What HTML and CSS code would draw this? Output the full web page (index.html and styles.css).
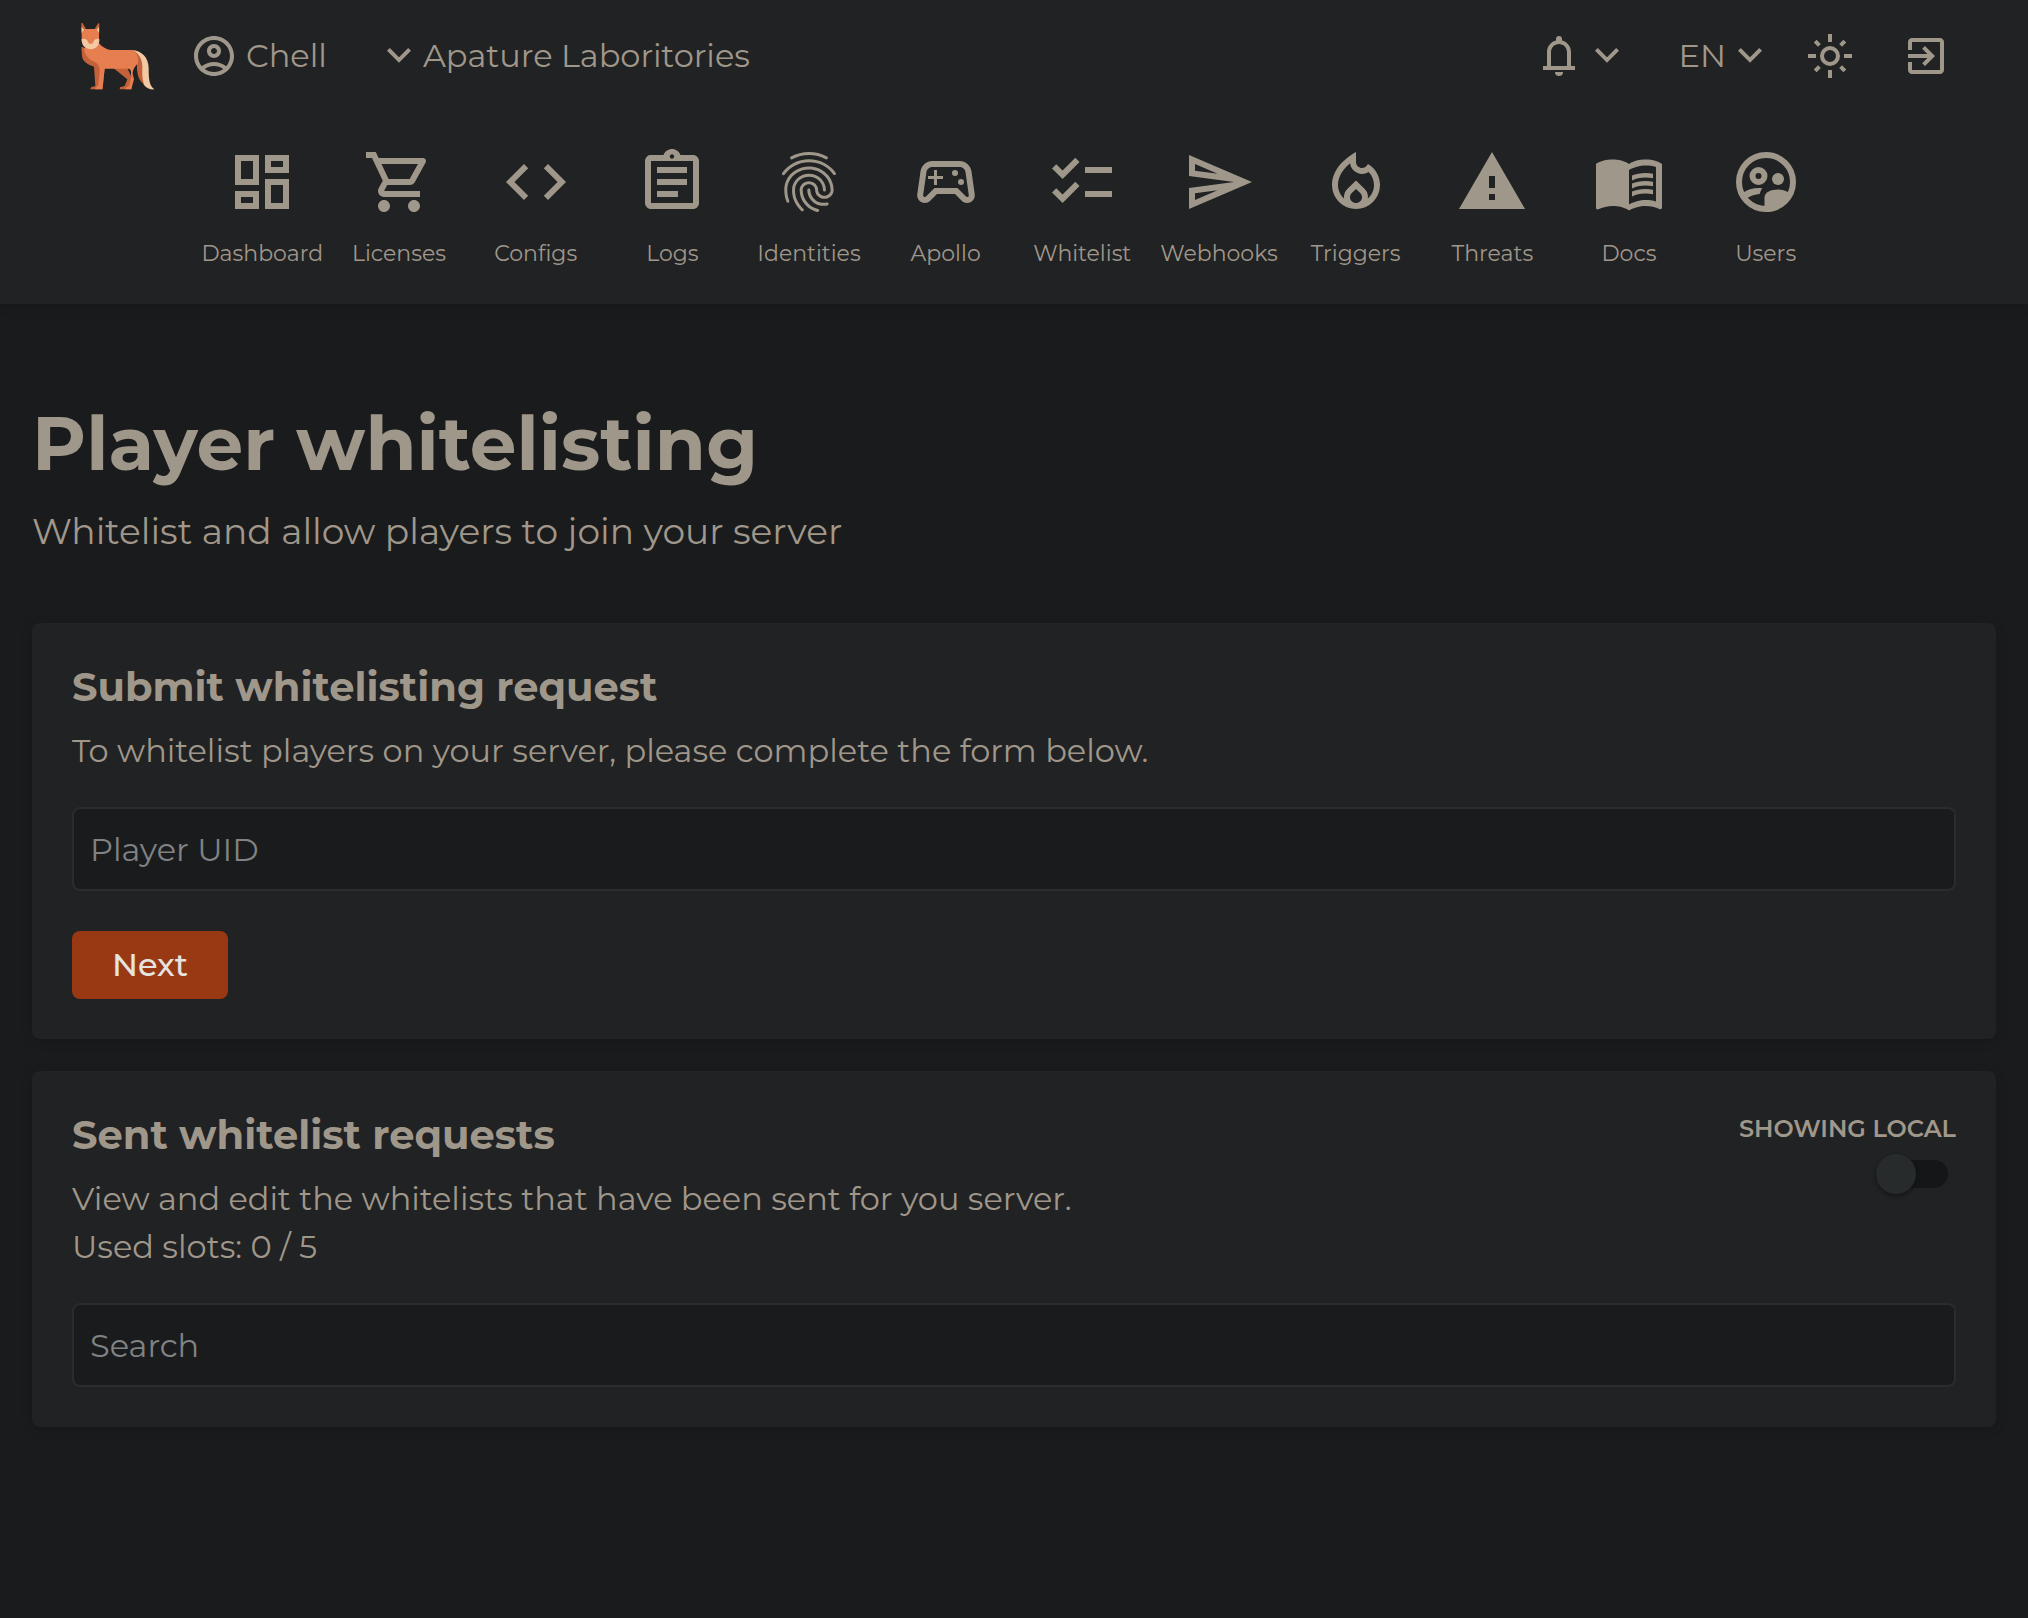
FILE: index.html
```html
<!DOCTYPE html>
<html lang="en">
<head>
<meta charset="utf-8">
<meta name="viewport" content="width=device-width, initial-scale=1">
<title>Player whitelisting</title>
<link rel="stylesheet" href="styles.css">
</head>
<body>
<header class="site-header">
  <div class="topbar">
    <a class="logo" href="#" aria-label="Home">
      <svg viewBox="60 66 228 204" aria-hidden="true">
        <path fill="#f2c9a2" d="M215 150C245 152 266 172 266 205C266 238 268 258 283 268C262 270 246 256 242 228L232 176Z"/>
        <path fill="#c3613b" d="M215 150C240 158 249 184 247 210C246 228 248 240 252 252C238 244 230 226 231 196Z"/>
        <path fill="#c3613b" d="M64 140L66 168C68 184 82 194 102 200L106 258L93 262L91 268H128L134 204H160L202 238L194 258L180 262L179 268H214L216 234L200 200L120 160Z"/>
        <path fill="#e67e50" d="M72 145C74 162 82 176 100 184C114 190 120 200 119 216L115 256L106 263V268H127L134 206H163L205 206C216 206 212 222 214 232L207 258L197 263V268H214L222 238L218 222C218 206 229 196 234 190C236 168 228 152 213 150H152C138 148 128 142 117 130L90 138Z"/>
        <path fill="#c3613b" d="M64 70L68 69L78 87H104L115 69L118 71V100H64Z"/>
        <path fill="#f2c9a2" d="M65 80L73 90L69 97L65 97ZM117 80L109 90L113 97H117Z"/>
        <path fill="#e67e50" d="M76 87H106L117 97V122L92 140L65 122V97Z"/>
        <path fill="#f2c9a2" d="M65 117C76 114 82 118 84 126C86 134 98 134 100 126C102 118 108 114 118 117C119 134 110 147 92 148C74 147 64 134 65 117Z"/>
      </svg>
    </a>
    <a class="top-item account" href="#">
      <svg class="icon" viewBox="0 0 24 24" aria-hidden="true"><path d="M12 2C6.480 2 2 6.480 2 12s4.480 10 10 10 10-4.480 10-10S17.520 2 12 2zM7.350 18.500C8.660 17.560 10.260 17 12 17s3.340.560 4.650 1.500c-1.310.940-2.910 1.500-4.650 1.500s-3.340-.560-4.650-1.500zm10.790-1.380C16.450 15.800 14.320 15 12 15s-4.450.800-6.140 2.120C4.700 15.730 4 13.950 4 12c0-4.420 3.580-8 8-8s8 3.580 8 8c0 1.950-.700 3.730-1.860 5.120z"/><path d="M12 6c-1.930 0-3.500 1.570-3.500 3.500S10.070 13 12 13s3.500-1.570 3.500-3.500S13.930 6 12 6zm0 5c-.830 0-1.500-.670-1.500-1.500S11.170 8 12 8s1.500.670 1.500 1.500S12.830 11 12 11z"/></svg>
      <span>Chell</span>
    </a>
    <button class="top-item community" type="button" aria-haspopup="menu">
      <svg class="icon" viewBox="0 0 24 24" aria-hidden="true"><path d="M7.410 8L12 12.580 16.590 8 18 9.410l-6 6-6-6z"/></svg>
      <span>Apature Laboritories</span>
    </button>
    <div class="tools">
      <button class="top-item" type="button" aria-haspopup="menu" aria-label="Notifications">
        <svg class="icon" viewBox="0 0 24 24" aria-hidden="true"><path fill-rule="evenodd" d="M4 19v-2h2v-7c0-2.800 1.900-5.200 4.500-5.800V3.500a1.500 1.500 0 0 1 3 0v.700C16.100 4.800 18 7.200 18 10v7h2v2H4zm4-2h8v-7c0-2.200-1.800-4-4-4s-4 1.800-4 4v7zM10 20h4a2 2 0 0 1-4 0z"/></svg>
        <svg class="icon" viewBox="0 0 24 24" aria-hidden="true"><path d="M7.410 8L12 12.580 16.590 8 18 9.410l-6 6-6-6z"/></svg>
      </button>
      <button class="top-item language" type="button" aria-haspopup="menu" aria-label="Language: EN">
        <span>EN</span>
        <svg class="icon" viewBox="0 0 24 24" aria-hidden="true"><path d="M7.410 8L12 12.580 16.590 8 18 9.410l-6 6-6-6z"/></svg>
      </button>
      <button class="top-item theme" type="button" aria-label="Switch theme">
        <svg class="icon" viewBox="0 0 24 24" aria-hidden="true"><g fill="none" stroke="currentColor" stroke-width="2"><circle cx="12" cy="12" r="4"/><path d="M12 1v4M12 19v4M1 12h4M19 12h4M4.600 4.600l2.100 2.100M17.300 17.300l2.100 2.100M4.600 19.400l2.100-2.100M17.300 6.700l2.100-2.100"/></g></svg>
      </button>
      <button class="top-item logout" type="button" aria-label="Log out">
        <svg class="icon" viewBox="0 0 24 24" aria-hidden="true"><path d="M10.090 15.590L11.500 17l5-5-5-5-1.410 1.410L12.670 11H3v2h9.670l-2.580 2.590zM19 3H5c-1.110 0-2 .900-2 2v4h2V5h14v14H5v-4H3v4c0 1.100.890 2 2 2h14c1.100 0 2-.900 2-2V5c0-1.100-.900-2-2-2z"/></svg>
      </button>
    </div>
  </div>
  <nav class="main-nav" aria-label="Main">
    <a href="#"><svg viewBox="0 0 24 24" aria-hidden="true"><path d="M19 5v2h-4V5h4M9 5v6H5V5h4m10 8v6h-4v-6h4M9 17v2H5v-2h4M21 3h-8v6h8V3zM11 3H3v10h8V3zm10 8h-8v10h8V11zm-10 4H3v6h8v-6z"/></svg><span>Dashboard</span></a>
    <a href="#"><svg viewBox="0 0 24 24" aria-hidden="true"><path d="M15.55 13c.75 0 1.41-.41 1.75-1.03l3.58-6.49c.37-.66-.11-1.48-.87-1.48H5.21l-.94-2H1v2h2l3.6 7.59-1.35 2.44C4.52 15.37 5.48 17 7 17h12v-2H7l1.1-2h7.45zM6.16 6h12.15l-2.76 5H8.53L6.16 6zM7 18c-1.100 0-1.990.9-1.990 2S5.900 22 7 22s2-.9 2-2-.9-2-2-2zm10 0c-1.100 0-1.990.9-1.990 2s.89 2 1.990 2 2-.9 2-2-.9-2-2-2z"/></svg><span>Licenses</span></a>
    <a href="#"><svg viewBox="0 0 24 24" aria-hidden="true"><path d="M9.4 16.6L4.8 12l4.6-4.6L8 6l-6 6 6 6 1.4-1.4zm5.200 0l4.6-4.6-4.6-4.6L16 6l6 6-6 6-1.4-1.4z"/></svg><span>Configs</span></a>
    <a href="#"><svg viewBox="0 0 24 24" aria-hidden="true"><path d="M7 15h7v2H7zm0-4h10v2H7zm0-4h10v2H7zm12-4h-4.18C14.4 1.84 13.3 1 12 1c-1.300 0-2.400.84-2.820 2H5c-.14 0-.27.01-.4.04-.39.08-.74.28-1.010.55-.18.18-.33.4-.43.64-.1.23-.16.49-.16.77v14c0 .27.06.54.16.78s.25.45.43.64c.27.27.62.47 1.010.55.13.02.26.03.4.03h14c1.100 0 2-.9 2-2V5c0-1.100-.9-2-2-2zm-7-.25c.41 0 .75.34.75.75s-.34.75-.75.75-.75-.34-.75-.75.34-.75.75-.75zM19 19H5V5h14v14z"/></svg><span>Logs</span></a>
    <a href="#"><svg viewBox="0 0 24 24" aria-hidden="true"><path d="M17.81 4.47c-.08 0-.16-.02-.23-.06C15.66 3.42 14 3 12.01 3c-1.98 0-3.86.47-5.57 1.41-.24.13-.54.04-.68-.2-.13-.24-.04-.55.2-.68C7.82 2.52 9.86 2 12.01 2c2.13 0 3.99.47 6.03 1.52.25.13.34.43.21.67-.09.18-.26.28-.44.28zM3.5 9.72c-.1 0-.2-.03-.29-.09-.23-.16-.28-.47-.12-.7.99-1.4 2.25-2.5 3.75-3.27C9.98 4.04 14 4.03 17.15 5.65c1.5.77 2.76 1.86 3.75 3.25.16.22.11.54-.12.7-.23.16-.54.11-.7-.12-.9-1.26-2.04-2.25-3.39-2.94-2.87-1.47-6.54-1.47-9.4.01-1.36.7-2.5 1.7-3.4 2.96-.08.14-.23.21-.39.21zm6.25 12.07c-.13 0-.26-.05-.35-.15-.87-.87-1.34-1.43-2.01-2.64-.69-1.23-1.05-2.73-1.05-4.34 0-2.97 2.54-5.39 5.66-5.39s5.66 2.42 5.66 5.39c0 .28-.22.5-.5.5s-.5-.22-.5-.5c0-2.42-2.09-4.39-4.66-4.39-2.57 0-4.66 1.97-4.66 4.39 0 1.44.32 2.77.93 3.85.64 1.15 1.08 1.64 1.85 2.42.19.2.19.51 0 .71-.11.1-.24.15-.37.15zm7.17-1.85c-1.19 0-2.24-.3-3.1-.89-1.49-1.01-2.38-2.65-2.38-4.39 0-.28.22-.5.5-.5s.5.22.5.5c0 1.41.72 2.74 1.94 3.56.71.48 1.54.71 2.54.71.24 0 .64-.03 1.04-.1.27-.05.53.13.58.41.05.27-.13.53-.41.58-.57.11-1.07.12-1.21.12zM14.91 22c-.04 0-.09-.01-.13-.02-1.59-.44-2.63-1.03-3.72-2.1-1.4-1.39-2.17-3.24-2.17-5.22 0-1.62 1.38-2.94 3.08-2.94 1.7 0 3.08 1.32 3.08 2.94 0 1.07.93 1.94 2.08 1.94s2.08-.87 2.08-1.94c0-3.77-3.25-6.83-7.25-6.83-2.84 0-5.44 1.58-6.61 4.03-.39.81-.59 1.76-.59 2.8 0 .78.07 2.01.67 3.61.1.26-.03.55-.29.64-.26.1-.55-.04-.64-.29-.49-1.31-.73-2.61-.73-3.96 0-1.2.23-2.29.68-3.24 1.33-2.79 4.28-4.6 7.51-4.6 4.55 0 8.25 3.51 8.25 7.83 0 1.62-1.38 2.94-3.08 2.94s-3.08-1.32-3.08-2.94c0-1.07-.93-1.94-2.08-1.94s-2.08.87-2.08 1.94c0 1.71.66 3.31 1.87 4.51.95.94 1.86 1.46 3.27 1.85.27.07.42.35.35.61-.05.23-.26.38-.47.38z"/></svg><span>Identities</span></a>
    <a href="#"><svg viewBox="0 0 24 24" aria-hidden="true"><path d="M21.58 16.09l-1.09-7.66C20.21 6.46 18.52 5 16.53 5H7.47C5.48 5 3.79 6.46 3.51 8.43l-1.09 7.66C2.2 17.63 3.39 19 4.94 19c.68 0 1.32-.27 1.8-.75L9 16h6l2.25 2.25c.48.48 1.13.75 1.8.75 1.56 0 2.75-1.37 2.53-2.91zm-2.1.72c-.08.09-.21.19-.42.19-.15 0-.29-.06-.39-.16L15.83 14H8.17l-2.84 2.84c-.1.1-.24.16-.39.16-.21 0-.34-.1-.42-.19-.08-.09-.16-.23-.13-.44l1.09-7.66C5.63 7.74 6.48 7 7.47 7h9.06c.99 0 1.84.74 1.98 1.72l1.09 7.66c.03.2-.05.34-.12.43zM9 8H8v2H6v1h2v2h1v-2h2v-1H9z"/><circle cx="17" cy="12" r="1"/><circle cx="15" cy="9" r="1"/></svg><span>Apollo</span></a>
    <a href="#" aria-current="page"><svg viewBox="0 0 24 24" aria-hidden="true"><path d="M22 7h-9v2h9V7zm0 8h-9v2h9v-2zM5.54 11L2 7.46l1.41-1.41 2.12 2.12 4.24-4.24 1.41 1.41L5.54 11zm0 8L2 15.46l1.41-1.41 2.12 2.12 4.24-4.24 1.41 1.41L5.54 19z"/></svg><span>Whitelist</span></a>
    <a href="#"><svg viewBox="0 0 24 24" aria-hidden="true"><path d="M4.01 6.03l7.51 3.22-7.52-1 .01-2.22m7.500 8.72L4 17.970v-2.22l7.51-1M2.01 3L2 10l15 2-15 2 .01 7L23 12 2.01 3z"/></svg><span>Webhooks</span></a>
    <a href="#"><svg viewBox="0 0 24 24" aria-hidden="true"><path fill-rule="evenodd" d="M16 6l-.44.55C14.38 8.02 12 7.19 12 5.300V2S4 6 4 13a8 8 0 0 0 16 0c0-2.960-1.610-5.620-4-7zM12 19c-1.100 0-2-.87-2-1.940 0-.51.2-.99.58-1.360L12 14.300l1.430 1.400c.37.37.57.85.57 1.360C14 18.130 13.100 19 12 19zm3.960-1.500c.04-.36.22-1.890-1.130-3.220L12 11.500l-2.830 2.780c-1.360 1.340-1.170 2.880-1.130 3.220C6.790 16.400 6 14.790 6 13c0-3.160 2.130-5.650 4.030-7.250.23 1.990 1.930 3.550 3.990 3.550.78 0 1.540-.23 2.180-.66C17.340 9.780 18 11.350 18 13c0 1.790-.79 3.400-2.040 4.500z"/></svg><span>Triggers</span></a>
    <a href="#"><svg viewBox="0 0 24 24" aria-hidden="true"><path d="M1 21h22L12 2 1 21zm12-3h-2v-2h2v2zm0-4h-2v-4h2v4z"/></svg><span>Threats</span></a>
    <a href="#"><svg viewBox="0 0 24 24" aria-hidden="true"><path d="M21 5c-1.110-.35-2.330-.5-3.500-.5-1.950 0-4.050.4-5.500 1.500-1.450-1.100-3.550-1.500-5.500-1.500S2.450 4.900 1 6v14.650c0 .25.25.5.5.5.1 0 .15-.05.25-.05C3.100 20.450 5.050 20 6.500 20c1.950 0 4.050.4 5.500 1.500 1.350-.85 3.800-1.500 5.500-1.500 1.650 0 3.350.3 4.750 1.050.1.05.15.05.25.05.25 0 .5-.25.5-.5V6c-.6-.45-1.250-.75-2-1zm0 13.500c-1.100-.35-2.300-.5-3.500-.5-1.700 0-4.150.65-5.500 1.500V8c1.350-.85 3.800-1.500 5.500-1.500 1.200 0 2.400.15 3.500.5v11.500z"/><path d="M17.500 10.500c.88 0 1.730.09 2.500.26V9.240c-.79-.15-1.640-.24-2.500-.24-1.700 0-3.240.29-4.500.83v1.660c1.130-.64 2.700-.99 4.500-.99zM13 12.490v1.660c1.130-.64 2.700-.99 4.500-.99.88 0 1.730.09 2.500.26V11.900c-.79-.15-1.640-.24-2.500-.24-1.700 0-3.240.3-4.500.83zM17.500 14.330c-1.700 0-3.240.29-4.500.83v1.660c1.130-.64 2.700-.99 4.500-.99.88 0 1.730.09 2.500.26v-1.520c-.79-.16-1.640-.24-2.500-.24z"/></svg><span>Docs</span></a>
    <a href="#"><svg viewBox="0 0 24 24" aria-hidden="true"><g fill="none" stroke="currentColor" stroke-width="2"><circle cx="12" cy="12" r="9"/><circle cx="9.500" cy="10" r="2"/></g><circle cx="16" cy="11" r="2"/><path d="M4 15.800C6 14.400 8.400 13.800 10.800 14.100C10.300 14.600 10.100 15.300 9.900 16C8.400 16.100 7 16.600 5.700 17.300Z"/><path d="M11.500 21V17.100C11.500 15.400 13.800 14.500 16 14.500C17.300 14.500 18.600 14.900 19.500 15.400L20.300 16.500L17 20.200Z"/></svg><span>Users</span></a>
  </nav>
</header>
<main class="page">
  <h1>Player whitelisting</h1>
  <p class="lead">Whitelist and allow players to join your server</p>
  <form class="card" action="#">
    <h2>Submit whitelisting request</h2>
    <p>To whitelist players on your server, please complete the form below.</p>
    <input class="field" type="text" placeholder="Player UID" aria-label="Player UID">
    <button class="primary" type="button">Next</button>
  </form>
  <section class="card">
    <div class="card-head">
      <div>
        <h2>Sent whitelist requests</h2>
        <p>View and edit the whitelists that have been sent for you server.<br>Used slots: 0 / 5</p>
      </div>
      <label class="scope">
        <span>SHOWING LOCAL</span>
        <input class="switch" type="checkbox" role="switch">
      </label>
    </div>
    <input class="field" type="text" placeholder="Search" aria-label="Search">
  </section>
</main>
</body>
</html>
```
FILE: styles.css
```css
:root {
  --bg: #191b1c;
  --surface: #202223;
  --border: #2a2c2d;
  --text: #a0978b;
  --accent: #983913;
}

* {
  box-sizing: border-box;
}

body {
  margin: 0;
  min-height: 100vh;
  background: var(--bg);
  color: var(--text);
  font-family: Montserrat, Inter, sans-serif;
  font-size: 32px;
  line-height: 48px;
}

h1, h2, p {
  margin: 0;
}

a {
  color: inherit;
  text-decoration: none;
}

button, input {
  font: inherit;
  color: inherit;
}

svg {
  display: block;
  flex: none;
  fill: currentColor;
}

.site-header {
  background: var(--surface);
  box-shadow: 0 2px 12px rgba(0, 0, 0, 0.15);
}

.topbar {
  display: flex;
  align-items: center;
  height: 112px;
  padding: 0 78px 0 80px;
}

.logo svg {
  width: 76px;
  height: 68px;
}

.top-item {
  display: flex;
  align-items: center;
  padding: 0;
  border: 0;
  background: none;
  white-space: nowrap;
}

.icon {
  width: 48px;
  height: 48px;
}

.account {
  gap: 8px;
  margin-left: 34px;
}

.community {
  margin-left: 48px;
}

.tools {
  display: flex;
  margin-left: auto;
}

.language {
  margin-left: 48px;
}

.theme {
  margin-left: 32px;
}

.logout {
  margin-left: 48px;
}

.main-nav {
  display: grid;
  grid-template-columns: repeat(12, 1fr);
  max-width: 1640px;
  margin: 0 auto;
  padding: 34px 0;
  font-size: 22px;
  line-height: 32px;
}

.main-nav a {
  display: flex;
  flex-direction: column;
  align-items: center;
  gap: 20px;
}

.main-nav svg {
  width: 72px;
  height: 72px;
}

.page {
  padding: 96px 32px;
}

h1 {
  font-size: 74px;
  line-height: 88px;
}

.lead {
  margin: 16px 0 64px;
  font-size: 36px;
  line-height: 55px;
}

.card {
  padding: 40px;
  border-radius: 8px;
  background: var(--surface);
  box-shadow: 0 2px 12px rgba(0, 0, 0, 0.15);
}

.card + .card {
  margin-top: 32px;
}

h2 {
  margin-bottom: 16px;
  font-size: 40px;
  line-height: 48px;
}

.field {
  display: block;
  width: 100%;
  height: 84px;
  margin-top: 32px;
  padding: 0 16px;
  border: 2px solid var(--border);
  border-radius: 8px;
  background: var(--bg);
}

.field::placeholder {
  color: #808284;
  opacity: 1;
}

.primary {
  display: block;
  height: 68px;
  margin-top: 40px;
  padding: 0 40px;
  border: 0;
  border-radius: 8px;
  background: var(--accent);
  color: #e6e4e1;
  font-weight: 500;
}

.card-head {
  display: flex;
  justify-content: space-between;
}

.scope {
  display: flex;
  flex-direction: column;
  align-items: flex-end;
  gap: 8px;
  font-size: 24px;
  font-weight: 600;
  line-height: 36px;
}

.switch {
  display: flex;
  align-items: center;
  appearance: none;
  width: 72px;
  height: 28px;
  margin: 5px 8px;
  border-radius: 14px;
  background: #151617;
}

.switch::before {
  content: "";
  width: 40px;
  height: 40px;
  flex: none;
  border-radius: 50%;
  background: #272b2c;
  box-shadow: 0 2px 4px rgba(0, 0, 0, 0.4);
}

.switch:checked::before {
  margin-left: 32px;
}
```
